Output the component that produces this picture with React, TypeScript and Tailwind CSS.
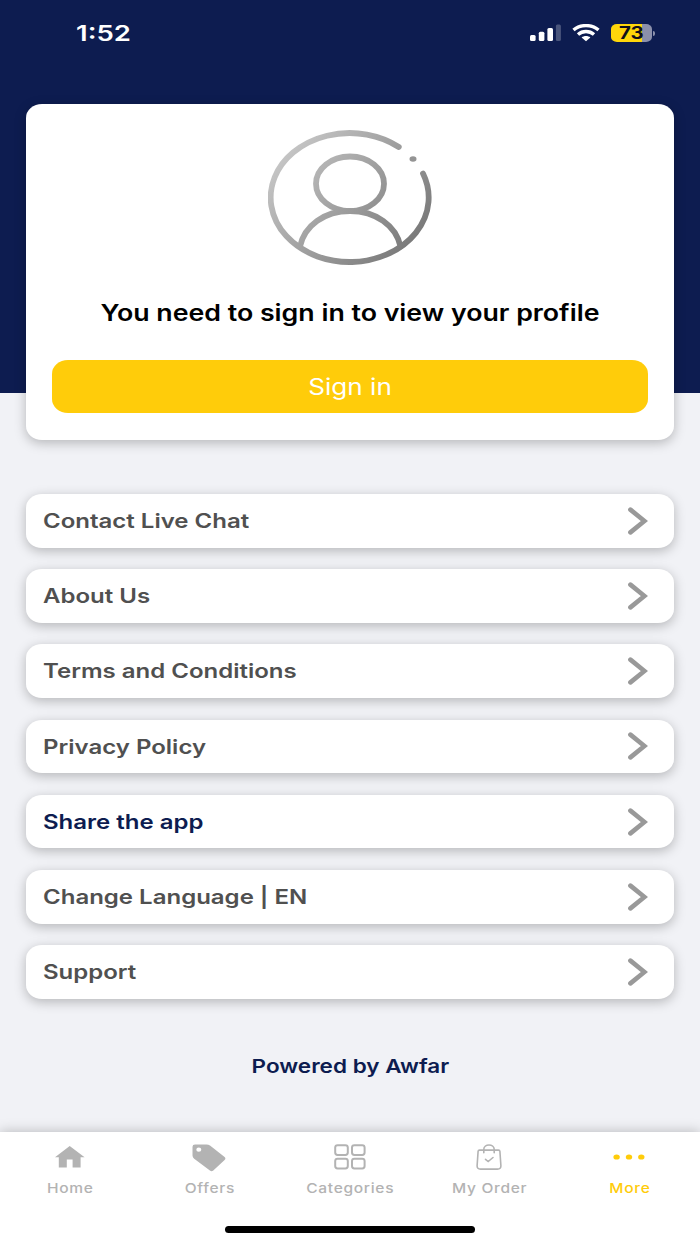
const MENU_ITEMS = [
  { label: 'Contact Live Chat' },
  { label: 'About Us' },
  { label: 'Terms and Conditions' },
  { label: 'Privacy Policy' },
  { label: 'Share the app', highlighted: true },
  { label: 'Change Language | EN' },
  { label: 'Support' },
]

const TABS = [
  { label: 'Home', icon: <HomeIcon /> },
  { label: 'Offers', icon: <TagIcon /> },
  { label: 'Categories', icon: <GridIcon /> },
  { label: 'My Order', icon: <BagIcon /> },
  { label: 'More', icon: <DotsIcon />, active: true },
]

function SignalIcon() {
  return (
    <svg className="w-8 h-[18px]" viewBox="0 0 32 18" fill="white">
      <rect x="1" y="11" width="5.6" height="6" rx="1.5" />
      <rect x="9.8" y="7.8" width="5.6" height="9.2" rx="1.5" />
      <rect x="18.4" y="4" width="5.6" height="13" rx="1.5" />
      <rect x="26.9" y="0.4" width="5" height="16.6" rx="1.5" opacity="0.25" />
    </svg>
  )
}

function WifiIcon() {
  return (
    <svg className="w-7 h-[18px]" viewBox="0 0 28 18" fill="none" stroke="white" strokeWidth="3.4">
      <path d="M1.5 6C8.2 0.1 19.8 0.1 26.5 6" />
      <path d="M6 10.5C10.5 6.5 17.5 6.5 22 10.5" />
      <path d="M14 17.2L9.6 13.5C11.9 11.5 16.1 11.5 18.4 13.5Z" fill="white" stroke="none" />
    </svg>
  )
}

function Battery() {
  return (
    <div className="flex items-center gap-px">
      <div className="w-[41.5px] h-[18.5px] rounded-[6px/5px] overflow-hidden flex items-center justify-center bg-[linear-gradient(90deg,#ffd60a_31px,#8b90ab_31px)]">
        <span className="text-[17px] leading-none font-bold text-[#10101a] origin-center scale-x-[1.2]">73</span>
      </div>
      <div className="w-[2px] h-[5px] rounded-r-full bg-[#8b90ab]" />
    </div>
  )
}

function AvatarIcon() {
  return (
    <svg className="w-[164px] h-[135px]" viewBox="0 0 164 135" fill="none">
      <defs>
        <linearGradient id="avatar" x1="20" y1="15" x2="145" y2="120" gradientUnits="userSpaceOnUse">
          <stop offset="0" stopColor="#c6c6c6" />
          <stop offset="1" stopColor="#777777" />
        </linearGradient>
      </defs>
      <g transform="translate(0.5 0.5)" stroke="url(#avatar)" strokeWidth="5.8" strokeLinecap="round">
        <path d="M130.3 16.5A79 64.5 0 1 0 154.5 43" />
        <ellipse cx="81.5" cy="53.3" rx="34" ry="27.3" />
        <path d="M31.5 116C36 95 56 80.5 81.5 80.5S127.500 95 132 116" />
      </g>
      <ellipse cx="145" cy="29" rx="3.500" ry="2.800" fill="#949494" />
    </svg>
  )
}

function ChevronIcon() {
  return (
    <svg className="w-5 h-7" viewBox="0 0 20 28" fill="none" stroke="#999999" strokeWidth="4.600" strokeLinecap="round">
      <path d="M2.400 2.600L16.400 14L2.400 25.400" />
    </svg>
  )
}

function HomeIcon() {
  return (
    <svg className="w-[30px] h-[22px] -mt-[1px]" viewBox="0 0 30 22" fill="currentColor">
      <path d="M14.700 0L0 11.300H3.800V21.500H11.800V13.500H17.600V21.500H25.600V11.300H29.600Z" />
    </svg>
  )
}

function TagIcon() {
  return (
    <svg className="w-[34px] h-[28px] mr-[2px]" viewBox="0 0 34 28" fill="currentColor">
      <path
        fillRule="evenodd"
        d="M3 0.500H14.500Q16.500 0.500 18 1.500L32.600 13Q34.200 14.500 32.600 16L21.300 26.600Q19.600 28 17.900 26.600L2.200 14.800Q0.500 13.400 0.500 11.500V2.800Q0.500 0.500 3 0.500ZM6.800 3.600A2.500 2.100 0 1 0 6.800 7.800A2.500 2.100 0 1 0 6.800 3.600Z"
      />
    </svg>
  )
}

function GridIcon() {
  return (
    <svg className="w-8 h-[26px] -mt-[1px]" viewBox="0 0 32 26" fill="none" stroke="currentColor" strokeWidth="2">
      <rect x="1.200" y="1.200" width="12.600" height="9.800" rx="2.400" />
      <rect x="18" y="1.200" width="12.600" height="9.800" rx="2.400" />
      <rect x="1.200" y="14.700" width="12.600" height="9.800" rx="2.400" />
      <rect x="18" y="14.700" width="12.600" height="9.800" rx="2.400" />
    </svg>
  )
}

function BagIcon() {
  return (
    <svg className="w-[26px] h-[26px] mr-[2px] -mt-[1px]" viewBox="0 0 26 26" fill="none" stroke="currentColor" strokeWidth="1.600" strokeLinecap="round">
      <path d="M3.500 6.100H22.500Q23.800 6.100 23.900 7.300L24.900 21.700Q25 25.100 21.500 25.100H4.500Q1 25.100 1.100 21.700L2.100 7.300Q2.200 6.100 3.500 6.100Z" />
      <path d="M7.800 8.700V5.300C7.800 -0.500 18.200 -0.500 18.200 5.300V8.700" />
      <path d="M9.500 15.300L12.200 17.500L17 13.500" />
    </svg>
  )
}

function DotsIcon() {
  return (
    <svg className="w-8 h-[6px] mr-[2px] -mt-[1px]" viewBox="0 0 32 6" fill="currentColor">
      <ellipse cx="3.600" cy="3" rx="3.200" ry="2.600" />
      <ellipse cx="16" cy="3" rx="3.200" ry="2.600" />
      <ellipse cx="28.300" cy="3" rx="3.200" ry="2.600" />
    </svg>
  )
}

function StatusBar() {
  return (
    <div className="h-[103.600px] shrink-0 pt-5 pl-[76px] pr-[45px] flex items-start justify-between">
      <span className="text-[22px] leading-[26px] font-semibold text-white origin-left scale-x-[1.25]">1:52</span>
      <div className="flex items-center gap-[11px] h-[26px]">
        <SignalIcon />
        <WifiIcon />
        <Battery />
      </div>
    </div>
  )
}

function TabBar() {
  return (
    <nav className="h-[111.800px] shrink-0 bg-white shadow-[0_0_12px_rgba(0,0,0,0.25)] flex flex-col items-center">
      <div className="w-full grid grid-cols-5 pt-[10.500px]">
        {TABS.map((tab) => (
          <div
            key={tab.label}
            className={`flex flex-col items-center ${tab.active ? 'text-[#ffcc0a]' : 'text-[#b3b3b3]'}`}
          >
            <div className="h-[30px] flex items-center justify-center">{tab.icon}</div>
            <span className="mt-[6px] text-[13.500px] leading-[18px] font-medium tracking-[0.600px] whitespace-nowrap scale-x-[1.150]">
              {tab.label}
            </span>
          </div>
        ))}
      </div>
      <div className="mt-[29.300px] w-[250px] h-[7px] rounded-full bg-black" />
    </nav>
  )
}

export default function App() {
  return (
    <main className="h-[1244px] w-full overflow-hidden flex flex-col font-['Inter',sans-serif] bg-[linear-gradient(#0d1c50_393px,#f1f2f6_393px)]">
      <StatusBar />

      {/* Sign in card */}
      <section className="mx-[26.300px] h-[336.400px] shrink-0 px-[26.200px] pt-[26.400px] rounded-[16px/14px] bg-white shadow-[0_3px_12px_rgba(0,0,0,0.25)] flex flex-col items-center">
        <AvatarIcon />
        <h1 className="mt-[34px] text-[22.500px] leading-[28px] font-semibold text-black whitespace-nowrap scale-x-[1.188]">
          You need to sign in to view your profile
        </h1>
        <button className="mt-[32.700px] w-full h-[53.300px] pt-[1px] rounded-[16px/14px] bg-[#ffcc0a] text-[22.500px] leading-[28px] text-white">
          <span className="inline-block scale-x-[1.160]">Sign in</span>
        </button>
      </section>

      <ul className="mt-[54px] mx-[26.300px] flex flex-col gap-[21.500px]">
        {MENU_ITEMS.map((item) => (
          <li
            key={item.label}
            className="h-[53.700px] pl-[17px] pr-[26px] rounded-[16px/14px] bg-white shadow-[0_3px_12px_rgba(0,0,0,0.25)] flex items-center justify-between"
          >
            <span
              className={`pt-[0.500px] text-[20px] leading-[26px] font-semibold whitespace-nowrap origin-left scale-x-[1.2] ${
                item.highlighted ? 'text-[#0d1c50]' : 'text-[#505050]'
              }`}
            >
              {item.label}
            </span>
            <ChevronIcon />
          </li>
        ))}
      </ul>

      <footer className="flex-1 pt-[55px] text-center">
        <span className="inline-block text-[19px] leading-[26px] font-semibold text-[#0d1c50] scale-x-[1.185]">
          Powered by Awfar
        </span>
      </footer>

      <TabBar />
    </main>
  )
}
